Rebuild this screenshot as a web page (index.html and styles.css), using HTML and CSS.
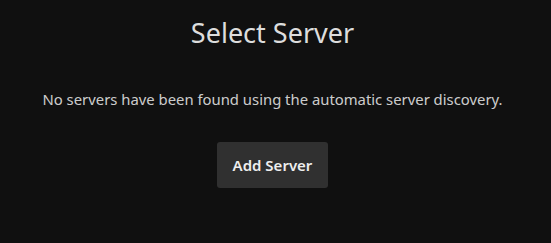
FILE: index.html
```html
<!DOCTYPE html>
<html>
<head>
<meta charset="utf-8">
<link rel="stylesheet" href="styles.css">
</head>
<body>
<div class="page">
  <h1 class="title">Select Server</h1>
  <p class="msg">No servers have been found using the automatic server discovery.</p>
  <button class="btn">Add Server</button>
</div>
</body>
</html>
```
FILE: styles.css
```css
html, body {
  margin: 0;
  padding: 0;
  background: #101010;
  height: 100%;
}
body {
  font-family: "Noto Sans", sans-serif;
  color: rgba(255,255,255,0.8);
}
.page {
  display: flex;
  flex-direction: column;
  align-items: center;
  padding-top: 14px;
  padding-right: 6px;
}
.title {
  font-weight: 400;
  font-size: 27px;
  margin: 0;
  line-height: 1.4;
  color: #ddd;
}
.msg {
  margin: 37px 0 0;
  font-size: 14.85px;
  line-height: 20px;
}
.btn {
  margin-top: 33px;
  font-family: "Noto Sans", sans-serif;
  font-weight: 600;
  font-size: 15px;
  color: #eee;
  background: #303030;
  border: 0;
  border-radius: 3px;
  width: 111px;
  height: 46px;
  padding: 0;
}
```
